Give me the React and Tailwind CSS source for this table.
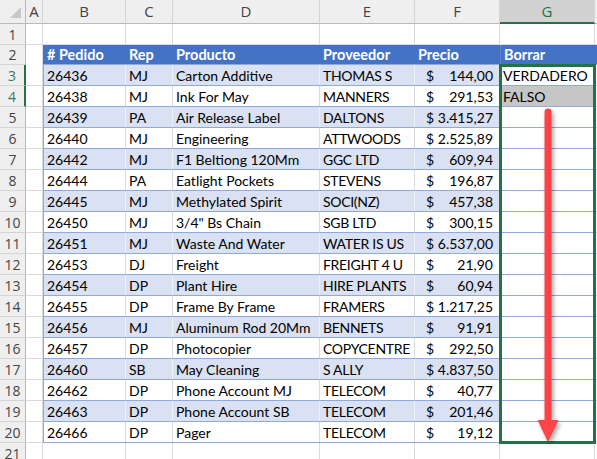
import React from 'react';

const ROWS = [
  ['26436', 'MJ', 'Carton Additive', 'THOMAS S', '144,00', 'VERDADERO'],
  ['26438', 'MJ', 'Ink For May', 'MANNERS', '291,53', 'FALSO'],
  ['26439', 'PA', 'Air Release Label', 'DALTONS', '3.415,27'],
  ['26440', 'MJ', 'Engineering', 'ATTWOODS', '2.525,89'],
  ['26442', 'MJ', 'F1 Beltiong 120Mm', 'GGC LTD', '609,94'],
  ['26444', 'PA', 'Eatlight Pockets', 'STEVENS', '196,87'],
  ['26445', 'MJ', 'Methylated Spirit', 'SOCI(NZ)', '457,38'],
  ['26450', 'MJ', '3/4" Bs Chain', 'SGB LTD', '300,15'],
  ['26451', 'MJ', 'Waste And Water', 'WATER IS US', '6.537,00'],
  ['26453', 'DJ', 'Freight', 'FREIGHT 4 U', '21,90'],
  ['26454', 'DP', 'Plant Hire', 'HIRE PLANTS', '60,94'],
  ['26455', 'DP', 'Frame By Frame', 'FRAMERS', '1.217,25'],
  ['26456', 'MJ', 'Aluminum Rod 20Mm', 'BENNETS', '91,91'],
  ['26457', 'DP', 'Photocopier', 'COPYCENTRE', '292,50'],
  ['26460', 'SB', 'May Cleaning', 'S ALLY', '4.837,50'],
  ['26462', 'DP', 'Phone Account MJ', 'TELECOM', '40,77'],
  ['26463', 'DP', 'Phone Account SB', 'TELECOM', '201,46'],
  ['26466', 'DP', 'Pager', 'TELECOM', '19,12'],
];

const font = { fontFamily: 'Lato, "Noto Sans", sans-serif' };

function ColHeader({ w, label, active }) {
  return (
    <div
      className={`${w} h-full flex items-center justify-center border-r border-[#d4d4d4] text-[15px] ${
        active ? 'bg-[#d2d2d2] text-[#1e7145] border-b-2 border-b-[#217346]' : 'text-[#444] border-b border-b-[#b9b9b9]'
      }`}
      style={{ fontFamily: '"Open Sans", "Noto Sans", sans-serif' }}
    >
      {label}
    </div>
  );
}

function RowNum({ n, active }) {
  return (
    <div
      className={`w-[26px] shrink-0 h-full flex items-center justify-center bg-[#efefef] border-b border-[#d4d4d4] text-[14px] ${
        active ? 'text-[#3d7a5c] border-r-[2px] border-r-[#217346]' : 'text-[#444] border-r border-r-[#b9b9b9]'
      }`}
      style={{ fontFamily: '"Open Sans", "Noto Sans", sans-serif' }}
    >
      {n}
    </div>
  );
}

export default function App() {
  return (
    <div className="relative w-[597px] h-[459px] overflow-hidden bg-white text-black text-[14px]" style={font}>
      {/* column headers */}
      <div className="flex h-[24px] bg-[#efefef]">
        <div className="relative w-[26px] shrink-0 h-full border-r border-b border-[#b9b9b9]">
          <div className="absolute right-[4px] bottom-[5px] w-0 h-0 border-l-[11px] border-l-transparent border-b-[11px] border-b-[#c8c8c8]" />
        </div>
        <ColHeader w="w-[17px] shrink-0" label="A" />
        <ColHeader w="w-[83px] shrink-0" label="B" />
        <ColHeader w="w-[47px] shrink-0" label="C" />
        <ColHeader w="w-[147px] shrink-0" label="D" />
        <ColHeader w="w-[95px] shrink-0" label="E" />
        <ColHeader w="w-[85px] shrink-0" label="F" />
        <ColHeader w="w-[95px] shrink-0" label="G" active />
        <div className="flex-1 h-full border-b border-[#b9b9b9]" />
      </div>

      {/* row 1 */}
      <div className="flex h-[21px]">
        <RowNum n="1" />
        {[17, 83, 47, 147, 95, 85, 95].map((w, i) => (
          <div key={i} className="shrink-0 h-full border-r border-b border-[#dadada]" style={{ width: w }} />
        ))}
        <div className="flex-1 border-b border-[#dadada]" />
      </div>

      {/* row 2: table header */}
      <div className="flex h-[20px]">
        <RowNum n="2" />
        <div className="w-[17px] shrink-0 h-full border-r border-[#dadada]" />
        <div className="flex flex-1 h-full bg-[#4472c4] text-white font-bold text-[14.5px] items-center border-b border-[#8ea9db]">
          <div className="w-[83px] shrink-0 pl-[4px]">#&nbsp;Pedido</div>
          <div className="w-[47px] shrink-0 pl-[3px]">Rep</div>
          <div className="w-[147px] shrink-0 pl-[3px]">Producto</div>
          <div className="w-[95px] shrink-0 pl-[3px]">Proveedor</div>
          <div className="w-[85px] shrink-0 pl-[3px]">Precio</div>
          <div className="w-[95px] shrink-0 pl-[3px] h-full flex items-center border-l border-[#5f86cc]">Borrar</div>
        </div>
      </div>

      {/* data rows */}
      {ROWS.map((r, i) => {
        const n = i + 3;
        const band = i % 2 === 0;
        const bg = band ? 'bg-[#d9e1f2]' : 'bg-white';
        const vline = band ? 'border-r-[#eef1f8]' : 'border-r-[#dadada]';
        return (
          <div key={n} className="flex h-[21px]">
            <RowNum n={n} active={n === 3 || n === 4} />
            <div className="w-[17px] shrink-0 h-full border-r border-b border-[#dadada]" />
            <div className={`flex h-full ${bg} border-b border-[#8ea9db] border-l border-l-[#8ea9db]`}>
              <div className={`w-[82px] shrink-0 h-full flex items-center pl-[3px] border-r ${vline}`}>{r[0]}</div>
              <div className={`w-[47px] shrink-0 h-full flex items-center pl-[3px] border-r ${vline}`}>{r[1]}</div>
              <div className={`w-[147px] shrink-0 h-full flex items-center pl-[3px] border-r ${vline} whitespace-nowrap overflow-hidden`}>{r[2]}</div>
              <div className={`w-[95px] shrink-0 h-full flex items-center pl-[3px] border-r ${vline} whitespace-nowrap overflow-hidden tracking-[-0.3px]`}>{r[3]}</div>
              <div className="w-[85px] shrink-0 h-full flex items-center justify-between pl-[11px] pr-[7px]">
                <span>$</span>
                <span>{r[4]}</span>
              </div>
            </div>
            <div
              className={`w-[95px] shrink-0 h-full flex items-center pl-[3px] border-b border-[#8ea9db] ${
                n === 4 ? 'bg-[#c6c6c6]' : 'bg-white'
              }`}
            >
              {r[5] || ''}
            </div>
            <div className="flex-1 border-b border-[#dadada] border-l border-l-[#dadada]" />
          </div>
        );
      })}

      {/* row 21 */}
      <div className="flex h-[21px]">
        <RowNum n="21" />
        {[17, 83, 47, 147, 95, 85, 95].map((w, i) => (
          <div key={i} className="shrink-0 h-full border-r border-b border-[#dadada]" style={{ width: w }} />
        ))}
        <div className="flex-1 border-b border-[#dadada]" />
      </div>

      {/* selection outline on G3:G20 */}
      <div className="absolute left-[499px] top-[64px] w-[97px] h-[380px] border-[3px] border-[#217346] pointer-events-none" />

      {/* red arrow */}
      <svg
        className="absolute left-[530px] top-[100px] drop-shadow-[2px_3px_2px_rgba(0,0,0,0.35)] pointer-events-none"
        width="40"
        height="350"
        viewBox="0 0 40 350"
      >
        <path d="M14.5 12 a3.5 3.5 0 0 1 7 0 V322 h-7 Z" fill="#ff4447" />
        <path d="M7.5 320 L28.5 320 L18 342 Z" fill="#ff4447" />
      </svg>
    </div>
  );
}
